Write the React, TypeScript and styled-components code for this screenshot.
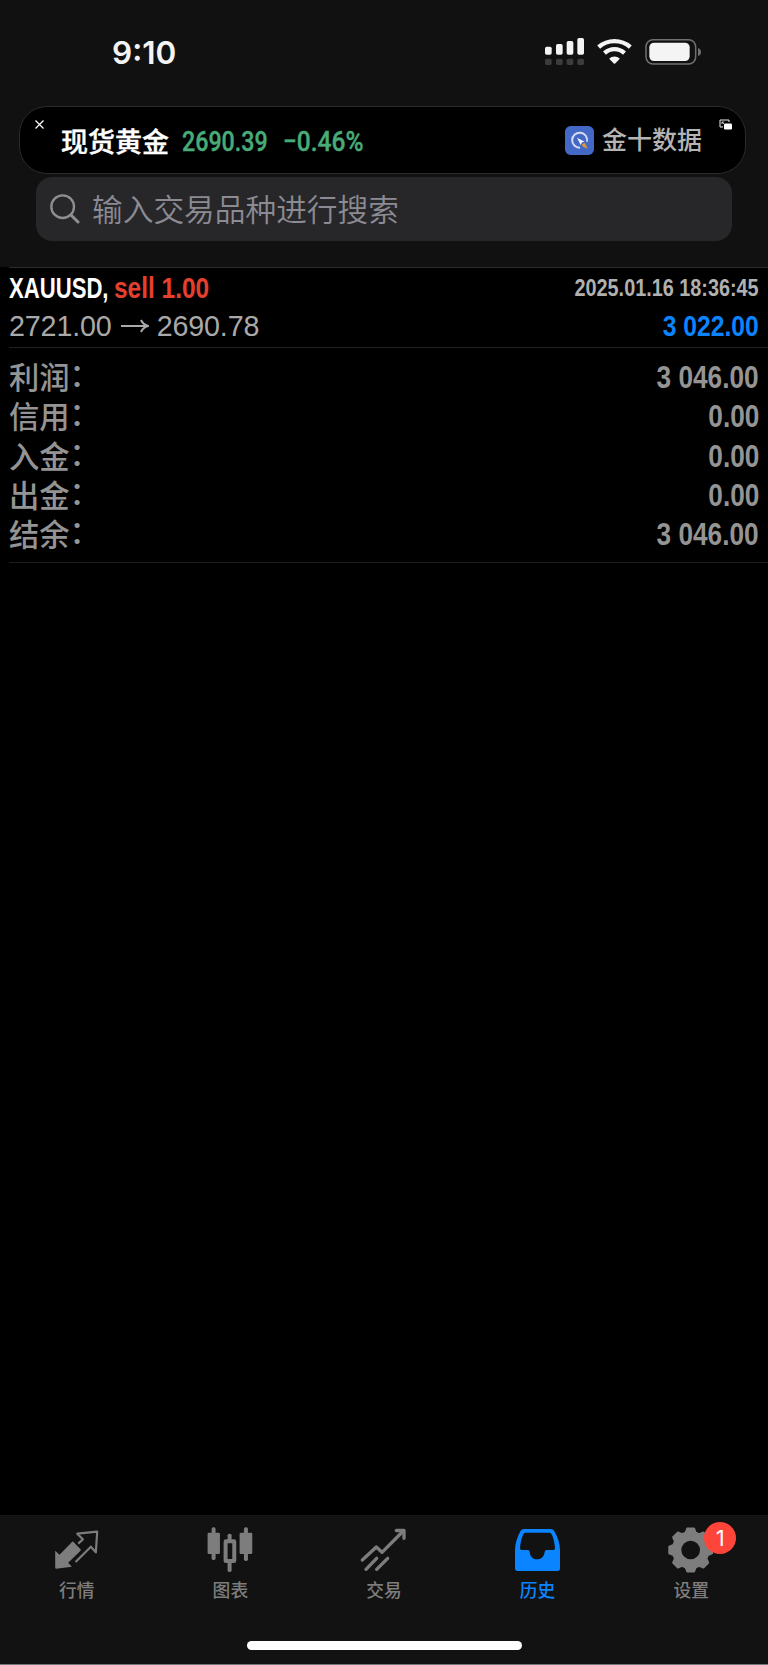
import React from "react";
import styled, { createGlobalStyle } from "styled-components";

const GlobalStyle = createGlobalStyle`
  * { box-sizing: border-box; }
  body {
    margin: 0;
    background: #000;
    font-family: "Liberation Sans", "Noto Sans CJK SC", sans-serif;
  }
`;

const Screen = styled.div`
  width: 768px;
  height: 1665px;
  display: flex;
  flex-direction: column;
  background: #000;
  overflow: hidden;
`;

const Header = styled.header`
  height: 267px;
  flex: none;
  background: #111;
`;

const StatusBar = styled.div`
  height: 106px;
  display: flex;
  justify-content: space-between;
  align-items: flex-start;
  padding: 38px 67px 0 112px;
`;

const Clock = styled.div`
  font: 600 31.5px/30px Inter, sans-serif;
  letter-spacing: 0;
  color: #f4f4f4;
`;

const StatusIcons = styled.div`
  display: flex;
  gap: 13px;
  svg { display: block; }
`;

const Ticker = styled.div`
  height: 68px;
  margin: 0 22px 0 19px;
  border: 1.5px solid #2b2b2c;
  border-radius: 28px;
  background: #000;
  display: flex;
  padding: 0 13px 0 14px;
  align-items: flex-start;
`;

const CloseIcon = styled.svg`
  margin: 13px 17px 0 1px;
  flex: none;
`;

const PipIcon = styled.svg`
  margin: 12px 0 0 17px;
  flex: none;
`;

const TickerName = styled.span`
  font: 500 27px/68px "Noto Sans CJK SC", sans-serif;
  -webkit-text-stroke: 0.4px #fff;
  color: #fff;
  width: 120.5px;
  flex: none;
`;

const TickerValue = styled.span<{ $width: number; $scale: number }>`
  font: 500 28.5px/69px Roboto, sans-serif;
  -webkit-text-stroke: 0.4px #48ab78;
  color: #48ab78;
  width: ${(p) => p.$width}px;
  flex: none;
  white-space: nowrap;
  transform: scaleX(${(p) => p.$scale});
  transform-origin: left;
`;

const Source = styled.div`
  margin-left: auto;
  height: 66px;
  display: flex;
  align-items: center;
  gap: 8px;
  font: 500 25px/63px "Noto Sans CJK SC", sans-serif;
  color: #b4b4b4;
  svg { display: block; }
`;

const SourceName = styled.span`
  height: 66px;
`;

const SearchField = styled.div`
  height: 64px;
  margin: 3px 36px 0;
  border-radius: 16px;
  background: #27272a;
  display: flex;
  align-items: flex-start;
  gap: 12px;
  padding-left: 14px;
  font: 350 30.7px/62px "Noto Sans CJK SC", sans-serif;
  color: #8c8b93;
  svg { margin-top: 17px; }
`;

const Deals = styled.main`
  flex: 1;
`;

const Divider = styled.div<{ $color: string }>`
  height: 1px;
  margin-left: 9px;
  background: ${(p) => p.$color};
`;

const Deal = styled.section`
  height: 79px;
  padding: 0 9px 0 9px;
`;

const Line = styled.div<{ $height: number }>`
  display: flex;
  justify-content: space-between;
  height: ${(p) => p.$height}px;
  line-height: ${(p) => p.$height}px;
`;

const Group = styled.div`
  display: flex;
  align-items: center;
`;

const Condensed = styled.span<{ $size: number; $scale: number; $color: string; $width?: number; $right?: boolean }>`
  display: block;
  font-size: ${(p) => p.$size}px;
  font-weight: 700;
  color: ${(p) => p.$color};
  width: ${(p) => (p.$width ? p.$width + "px" : "auto")};
  white-space: nowrap;
  transform: scaleX(${(p) => p.$scale});
  transform-origin: ${(p) => (p.$right ? "right" : "left")};
`;

const Price = styled.span`
  font-size: 28.7px;
  letter-spacing: -0.15px;
  color: #a9a9a9;
`;

const Arrow = styled.svg`
  margin: 0 8px 0 9px;
`;

const Summary = styled.section`
  padding: 10px 9px 8px 9px;
  height: 214px;
  display: grid;
  grid-template-rows: repeat(5, 39.3px);
`;

const SummaryRow = styled.div`
  display: flex;
  justify-content: space-between;
  line-height: 39px;
`;

const SummaryLabel = styled.span`
  font: 500 30.3px/39px "Liberation Sans", "Noto Sans CJK SC", sans-serif;
  padding-top: 1px;
  color: #949494;
`;

const Colon = styled.span`
  display: inline-block;
  transform: translateY(-3px);
`;

const TabBar = styled.nav`
  height: 150px;
  flex: none;
  background: #121212;
  border-top: 1px solid #161616;
  border-bottom: 1px solid #777;
  display: flex;
  flex-direction: column;
  justify-content: space-between;
  align-items: center;
`;

const Tabs = styled.div`
  width: 100%;
  display: grid;
  grid-template-columns: repeat(5, 1fr);
  padding-top: 8px;
`;

const Tab = styled.div<{ $active?: boolean }>`
  display: flex;
  flex-direction: column;
  align-items: center;
  color: ${(p) => (p.$active ? "#0b84ff" : "#7d7d7d")};
  font: 500 17.8px/27px "Noto Sans CJK SC", sans-serif;
`;

const IconBox = styled.div`
  position: relative;
  height: 52px;
  svg { display: block; }
`;

const Badge = styled.span`
  position: absolute;
  left: 39px;
  top: -2.5px;
  width: 32px;
  height: 32px;
  border-radius: 50%;
  background: #ff453a;
  color: #fff;
  font: 400 22px/32px Inter, sans-serif;
  text-align: center;
`;

const HomeIndicator = styled.div`
  width: 275px;
  height: 9px;
  margin-bottom: 14px;
  border-radius: 5px;
  background: #fff;
`;

const SignalIcon = () => (
  <svg width="39" height="27" viewBox="0 0 117 81">
    <g fill="#f4f4f4">
      <rect x="0" y="26" width="20" height="24" rx="5" />
      <rect x="33" y="18" width="20" height="32" rx="5" />
      <rect x="65" y="9" width="20" height="41" rx="5" />
      <rect x="97" y="0" width="20" height="50" rx="5" />
    </g>
    <g fill="#3c3c3c">
      {[0, 33, 65, 97].map((x) => (
        <rect key={x} x={x} y="62" width="20" height="19" rx="5" />
      ))}
    </g>
  </svg>
);

const WifiIcon = () => (
  <svg width="35" height="27" viewBox="0 0 105 81">
    <g fill="none" stroke="#f4f4f4" strokeWidth="13">
      <path d="M5 27.500C32 3.500 73 3.500 100 27.500" />
      <path d="M22.500 45.500C40 29.500 65 29.500 82.500 45.500" />
    </g>
    <path d="M36.500 62C46 53.500 59 53.500 68.500 62L54.500 76.500Q52.500 78.500 50.500 76.500Z" fill="#f4f4f4" />
  </svg>
);

const BatteryIcon = () => (
  <svg width="56" height="27" viewBox="-1 0 168 81">
    <rect x="2" y="5" width="149" height="73" rx="21" fill="none" stroke="#707070" strokeWidth="4.500" />
    <rect x="12" y="14" width="121" height="55" rx="14" fill="#f4f4f4" />
    <path d="M158 30Q167 33 167 42T158 54Z" fill="#707070" />
  </svg>
);

const SourceLogo = () => (
  <svg width="29" height="29" viewBox="0 0 87 87">
    <rect width="87" height="87" rx="17" fill="#4368c6" />
    <path d="M45 65A22.500 22.500 0 1 1 66 47" fill="none" stroke="#d5dcf0" strokeWidth="6" />
    <path d="M36 35L59 47L51 49L47 57Z" fill="#f2f5fd" />
    <path d="M50 55L60 51L68 68L54 62Z" fill="#dc9832" />
  </svg>
);

const SearchIcon = () => (
  <svg width="30" height="30" viewBox="0 0 90 90" fill="none" stroke="#8e8e93" strokeLinecap="round">
    <circle cx="38" cy="38" r="34" strokeWidth="7" />
    <path d="M63 63L84 84" strokeWidth="9" />
  </svg>
);

const QuotesIcon = () => (
  <svg width="52" height="52" viewBox="152.400 72 156 156">
    <path d="M165 152L178 164L216 125Q218 124 220 126L241 148Q243 150 241 152L204 188L215 200L168 206Q165 206 165 203Z" fill="currentColor" />
    <path d="M234 131L248 118L231 101L291 95L287 157L272 140L226 186" fill="none" stroke="currentColor" strokeWidth="6.500" strokeLinejoin="round" />
  </svg>
);

const ChartIcon = () => (
  <svg width="52" height="52" viewBox="613.200 72 156 156">
    <g fill="currentColor">
      <rect x="636" y="82" width="12" height="98" rx="5" />
      <rect x="624" y="98" width="37" height="64" rx="4" />
      <rect x="733" y="82" width="12" height="101" rx="5" />
      <rect x="720" y="98" width="38" height="64" rx="4" />
      <rect x="684" y="101" width="12" height="24" rx="5" />
      <rect x="684" y="182" width="12" height="34" rx="5" />
    </g>
    <rect x="678" y="124" width="26" height="59" rx="1" fill="none" stroke="currentColor" strokeWidth="12" />
  </svg>
);

const TradeIcon = () => (
  <svg width="52" height="52" viewBox="325 72 156 156" fill="none" stroke="currentColor" strokeWidth="10" strokeLinecap="round" strokeLinejoin="round">
    <path d="M338 180L380 141L397 157L461 93" />
    <path d="M440 91.500H463V115" />
    <path d="M349 208L381 175M381 208L414 175" />
  </svg>
);

const HistoryIcon = () => (
  <svg width="52" height="52" viewBox="12 72 156 156">
    <path
      fill="currentColor"
      fillRule="evenodd"
      d="M48 87H128Q135 87 138 92C149 110 156 130 156 150V205Q156 213 148 213H29Q21 213 21 205V150C21 130 28 110 38 92Q41 87 48 87ZM53 98Q49 98 47 101C40 113 37 130 36 145Q36 150 41 150H60Q64 150 65 156C67 171 75 178 87 178S108 171 110 156Q111 150 115 150H136Q141 150 141 145C140 130 137 113 130 101Q128 98 124 98Z"
    />
  </svg>
);

const gearOutline = Array.from({ length: 8 }, (_, i) =>
  [[-16, 54], [-9, 65], [9, 65], [16, 54]].map(([offset, radius]) => {
    const angle = ((i * 45 + offset) * Math.PI) / 180;
    return `${(77 + radius * Math.sin(angle)).toFixed(1)},${(78 - radius * Math.cos(angle)).toFixed(1)}`;
  }).join(" ")
).join(" ");

const SettingsIcon = () => (
  <svg width="52" height="52" viewBox="0 0 156 156">
    <polygon points={gearOutline} fill="currentColor" stroke="currentColor" strokeWidth="6" strokeLinejoin="round" />
    <circle cx="77" cy="78" r="28" fill="#121212" />
  </svg>
);

const summary = [
  { label: "利润", value: "3 046.00" },
  { label: "信用", value: "0.00" },
  { label: "入金", value: "0.00" },
  { label: "出金", value: "0.00" },
  { label: "结余", value: "3 046.00" },
];

const tabs = [
  { label: "行情", Icon: QuotesIcon },
  { label: "图表", Icon: ChartIcon },
  { label: "交易", Icon: TradeIcon },
  { label: "历史", Icon: HistoryIcon, active: true },
  { label: "设置", Icon: SettingsIcon, badge: 1 },
];

export default function App() {
  return (
    <Screen>
      <GlobalStyle />
      <Header>
        <StatusBar>
          <Clock>9:10</Clock>
          <StatusIcons>
            <SignalIcon />
            <WifiIcon />
            <BatteryIcon />
          </StatusIcons>
        </StatusBar>
        <Ticker>
          <CloseIcon width="9" height="9" viewBox="0 0 9 9" stroke="#fff" strokeWidth="1.200">
            <path d="M.5 .5L8.500 8.500M8.500 .5L.5 8.500" />
          </CloseIcon>
          <TickerName>现货黄金</TickerName>
          <TickerValue $width={101} $scale={0.815}>2690.39</TickerValue>
          <TickerValue $width={82} $scale={0.86}>−0.46%</TickerValue>
          <Source>
            <SourceLogo />
            <SourceName>金十数据</SourceName>
          </Source>
          <PipIcon width="13" height="11" viewBox="0 0 13 11">
            <path d="M4 8H1V1H10V3" fill="none" stroke="#e8e8e8" strokeWidth="1" />
            <path d="M3 3L5 5M3 5V3H5" fill="none" stroke="#e8e8e8" strokeWidth=".8" />
            <rect x="5" y="4.500" width="8" height="6" rx="1.200" fill="#fff" />
          </PipIcon>
        </Ticker>
        <SearchField>
          <SearchIcon />
          输入交易品种进行搜索
        </SearchField>
      </Header>
      <Deals>
        <Divider $color="#2d2d2d" />
        <Deal>
          <Line $height={40}>
            <Group>
              <Condensed $size={30} $scale={0.737} $color="#fff" $width={105}>XAUUSD,</Condensed>
              <Condensed $size={30} $scale={0.815} $color="#e5402f">sell 1.00</Condensed>
            </Group>
            <Condensed $size={24.3} $scale={0.816} $color="#b0b0b0" $right>2025.01.16 18:36:45</Condensed>
          </Line>
          <Line $height={36}>
            <Group>
              <Price>2721.00</Price>
              <Arrow width="28" height="14" viewBox="0 0 28 14" fill="none" stroke="#a9a9a9" strokeWidth="2">
                <path d="M0 7H27M20 1Q22 5.500 27 7Q22 8.500 20 13" />
              </Arrow>
              <Price>2690.78</Price>
            </Group>
            <Condensed $size={30} $scale={0.822} $color="#0b84ff" $right>3 022.00</Condensed>
          </Line>
        </Deal>
        <Divider $color="#212121" />
        <Summary>
          {summary.map((row) => (
            <SummaryRow key={row.label}>
              <SummaryLabel>{row.label}<Colon>：</Colon></SummaryLabel>
              <Condensed $size={31.5} $scale={0.832} $color="#949494" $right>{row.value}</Condensed>
            </SummaryRow>
          ))}
        </Summary>
        <Divider $color="#1d1d1d" />
      </Deals>
      <TabBar>
        <Tabs>
          {tabs.map(({ label, Icon, active, badge }) => (
            <Tab key={label} $active={active}>
              <IconBox>
                <Icon />
                {badge && <Badge>{badge}</Badge>}
              </IconBox>
              {label}
            </Tab>
          ))}
        </Tabs>
        <HomeIndicator />
      </TabBar>
    </Screen>
  );
}
